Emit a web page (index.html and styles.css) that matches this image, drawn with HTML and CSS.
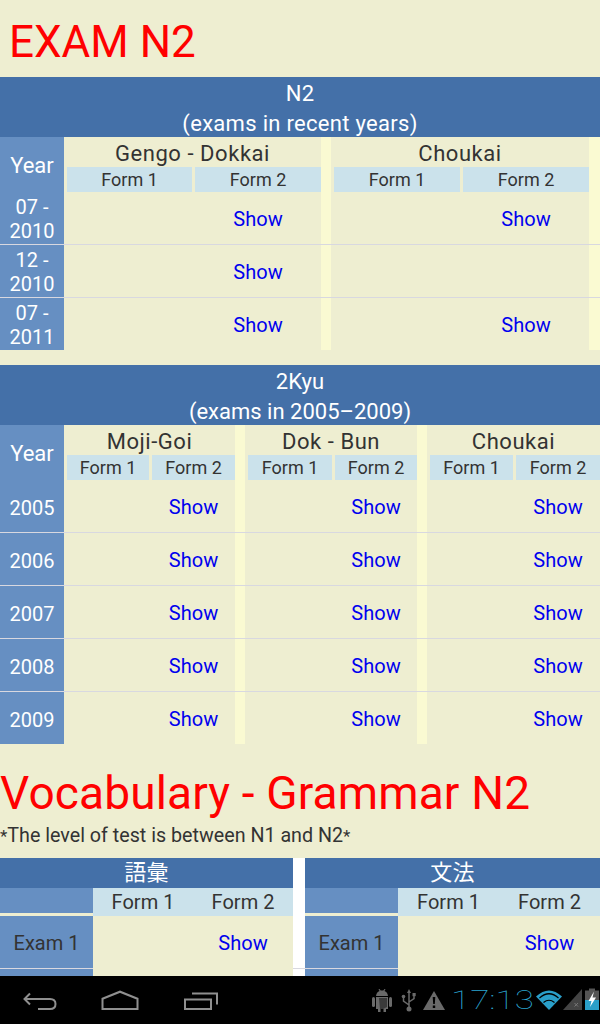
FILE: index.html
```html
<!DOCTYPE html>
<html lang="en">
<head>
    <meta charset="UTF-8">
    <meta name="viewport" content="width=device-width, initial-scale=1.0">
    <title>Exam N2</title>
    <link rel="stylesheet" href="styles.css">
</head>
<body>
    <div class="page">
        <h1 class="title title-exam">EXAM N2</h1>

        <div class="exam-table recent">
            <div class="table-head">N2<br>(exams in recent years)</div>
            <div class="row head-row">
                <div class="year year-head">Year</div>
                <div class="group g1">Gengo - Dokkai</div>
                <div class="form f1">Form 1</div>
                <div class="form f2">Form 2</div>
                <div class="strip s1"></div>
                <div class="group g2">Choukai</div>
                <div class="form f3">Form 1</div>
                <div class="form f4">Form 2</div>
                <div class="strip s2"></div>
            </div>
            <div class="row">
                <div class="year two-line">07 -<br>2010</div>
                <div></div><a class="show" href="#">Show</a><div class="strip"></div>
                <div></div><a class="show" href="#">Show</a><div class="strip"></div>
            </div>
            <div class="row line">
                <div class="year two-line">12 -<br>2010</div>
                <div></div><a class="show" href="#">Show</a><div class="strip"></div>
                <div></div><div></div><div class="strip"></div>
            </div>
            <div class="row line">
                <div class="year two-line">07 -<br>2011</div>
                <div></div><a class="show" href="#">Show</a><div class="strip"></div>
                <div></div><a class="show" href="#">Show</a><div class="strip"></div>
            </div>
        </div>

        <div class="exam-table old">
            <div class="table-head">2Kyu<br>(exams in 2005–2009)</div>
            <div class="row head-row">
                <div class="year year-head">Year</div>
                <div class="group g1">Moji-Goi</div>
                <div class="form f1">Form 1</div>
                <div class="form f2">Form 2</div>
                <div class="strip s1"></div>
                <div class="group g2">Dok - Bun</div>
                <div class="form f3">Form 1</div>
                <div class="form f4">Form 2</div>
                <div class="strip s2"></div>
                <div class="group g3">Choukai</div>
                <div class="form f5">Form 1</div>
                <div class="form f6">Form 2</div>
            </div>
            <div class="row">
                <div class="year">2005</div>
                <div></div><a class="show" href="#">Show</a><div class="strip"></div>
                <div></div><a class="show" href="#">Show</a><div class="strip"></div>
                <div></div><a class="show" href="#">Show</a>
            </div>
            <div class="row line">
                <div class="year">2006</div>
                <div></div><a class="show" href="#">Show</a><div class="strip"></div>
                <div></div><a class="show" href="#">Show</a><div class="strip"></div>
                <div></div><a class="show" href="#">Show</a>
            </div>
            <div class="row line">
                <div class="year">2007</div>
                <div></div><a class="show" href="#">Show</a><div class="strip"></div>
                <div></div><a class="show" href="#">Show</a><div class="strip"></div>
                <div></div><a class="show" href="#">Show</a>
            </div>
            <div class="row line">
                <div class="year">2008</div>
                <div></div><a class="show" href="#">Show</a><div class="strip"></div>
                <div></div><a class="show" href="#">Show</a><div class="strip"></div>
                <div></div><a class="show" href="#">Show</a>
            </div>
            <div class="row line">
                <div class="year">2009</div>
                <div></div><a class="show" href="#">Show</a><div class="strip"></div>
                <div></div><a class="show" href="#">Show</a><div class="strip"></div>
                <div></div><a class="show" href="#">Show</a>
            </div>
        </div>

        <h1 class="title title-vocab">Vocabulary - Grammar N2</h1>
        <p class="note"><span class="star">*</span>The level of test is between N1 and N2<span class="star">*</span></p>

        <div class="vocab-wrap">
            <div class="vocab-table">
                <div class="table-head small">語彙</div>
                <div class="vocab-row">
                    <div class="vocab-side side-head"></div>
                    <div class="vocab-form">Form 1</div>
                    <div class="vocab-form">Form 2</div>
                </div>
                <div class="vocab-row exam-row">
                    <div class="vocab-side">Exam 1</div>
                    <div></div>
                    <a class="show" href="#">Show</a>
                </div>
                <div class="vocab-row exam-row line">
                    <div class="vocab-side"></div>
                </div>
            </div>
            <div class="vocab-table">
                <div class="table-head small">文法</div>
                <div class="vocab-row">
                    <div class="vocab-side side-head"></div>
                    <div class="vocab-form">Form 1</div>
                    <div class="vocab-form">Form 2</div>
                </div>
                <div class="vocab-row exam-row">
                    <div class="vocab-side">Exam 1</div>
                    <div></div>
                    <a class="show" href="#">Show</a>
                </div>
                <div class="vocab-row exam-row line">
                    <div class="vocab-side"></div>
                </div>
            </div>
        </div>
    </div>

    <div class="system-bar">
        <svg class="nav-icons" width="240" height="48" viewBox="0 0 240 48">
            <path d="M30 17.5L24.5 23L30 28.5M25 23H50Q55.5 23 55.5 28T50 33H38" />
            <path d="M102.5 33V22.7L120 15.7L137.5 22.7V33Z" />
            <path d="M185 23.5H211V33H185Z" />
            <path d="M192 17.5H217V28.5" />
        </svg>
        <div class="status">
            <svg class="status-left" width="84" height="48" viewBox="0 0 84 48">
                <!-- android -->
                <path class="fill" d="M7 21H19V33H17V36H14.500V33H11.500V36H9V33H7Z" />
                <path class="fill" d="M7 20Q7.500 16 10.500 15L9.500 13H10.500L11.700 14.600Q13 14.300 14.300 14.600L15.500 13H16.500L15.500 15Q18.500 16 19 20Z" />
                <rect class="fill" x="3" y="21" width="3" height="10" rx="1.500" />
                <rect class="fill" x="20" y="21" width="3" height="10" rx="1.500" />
                <path class="dots" d="M10 22H18V31L14 33H11Z" />
                <!-- usb -->
                <path class="usb" d="M40 16V32M40 29L34.500 25V21M40 26L45 22.500V19" />
                <path class="fill" d="M40 13L42 17H38Z" />
                <circle class="fill" cx="40" cy="33" r="2.500" />
                <circle class="fill" cx="34.500" cy="20.500" r="1.800" />
                <rect class="fill" x="43.500" y="17" width="3.200" height="3.200" />
                <!-- warning -->
                <path class="fill" d="M65 15L76 34H54Z" />
                <path class="mark" d="M63.700 21H66.300L65.800 28H64.200ZM63.800 29.500H66.200V32H63.800Z" />
            </svg>
            <span class="clock">17:13</span>
            <svg class="status-right" width="64" height="48" viewBox="0 0 64 48">
                <!-- wifi -->
                <path class="wifi" d="M0 20.500Q13 8.500 26 20.500L13 34Z" />
                <path class="wifi-gap" d="M3.500 22Q13 13.500 22.500 22M7.500 26.500Q13 22 18.500 26.500" />
                <!-- signal -->
                <path class="signal" d="M46 13V34H27Z" />
                <path class="signal-x" d="M38.500 27L42 30.500M42 27L38.500 30.500" />
                <!-- battery -->
                <path class="bat-top" d="M53 14.500V12.500H59V14.500H63V24H49V14.500Z" />
                <rect class="bat-low" x="49" y="24" width="14" height="10" />
                <path class="bolt" d="M58 15.500L52.500 25H55.500L54 31L60 21.500H56.500Z" />
            </svg>
        </div>
    </div>
</body>
</html>
```

FILE: styles.css
```css
html, body {
    margin: 0;
    height: 1024px;
    overflow: hidden;
}
body {
    background: #eeeed1;
    color: #333;
    font-family: Roboto, "Noto Sans CJK JP", sans-serif;
    font-size: 20px;
    position: relative;
}
.title {
    color: #f00;
    font-weight: 400;
    line-height: 54px;
    margin: 0;
}
.title-exam {
    font-size: 44px;
    padding: 15px 0 8px 9px;
}
.title-vocab {
    font-size: 46px;
    letter-spacing: 0.15px;
    padding-top: 7px;
}
.note {
    margin: 0;
    padding: 1px 0 7px;
    line-height: 30px;
    font-size: 19.7px;
}
.star {
    font-size: 17px;
}

.exam-table {
    margin-bottom: 15px;
}
.table-head {
    background: #4470a8;
    color: #fff;
    text-align: center;
    font-size: 22px;
    letter-spacing: 0.3px;
    line-height: 30px;
    height: 58px;
    padding-top: 2px;
}
.old .table-head {
    letter-spacing: 0;
}
.table-head.small {
    height: 30px;
    padding-top: 0;
}

.row {
    display: grid;
    height: 52px;
}
.row.line {
    height: 53px;
    grid-template-rows: 53px;
}
.head-row {
    height: 55px;
    grid-template-rows: 30px 25px;
}
.recent .row {
    grid-template-columns: 64px 128px 129px 10px 129px 129px 11px;
}
.old .row {
    grid-template-columns: 64px 85px 86px 10px 87px 85px 10px 86px 87px;
}
.line > * {
    border-top: 1px solid #d8d8e0;
}
.year {
    background: #668fc2;
    color: #fff;
    line-height: 24px;
    text-align: center;
    display: flex;
    align-items: center;
    justify-content: center;
    padding-top: 4px;
    box-sizing: border-box;
}
.year.two-line {
    padding-top: 1px;
}
.year-head {
    grid-row: 1 / 3;
    grid-column: 1;
    font-size: 22px;
    padding-top: 2px;
}
.group {
    grid-row: 1;
    text-align: center;
    line-height: 34px;
    letter-spacing: 0.55px;
    font-size: 22px;
}
.g1 { grid-column: 2 / 4; }
.g2 { grid-column: 5 / 7; }
.g3 { grid-column: 8 / 10; }
.form {
    grid-row: 2;
    background: #cbe2eb;
    margin-left: 3px;
    text-align: center;
    line-height: 25px;
    font-size: 18px;
}
.f1 { grid-column: 2; }
.f2 { grid-column: 3; }
.f3 { grid-column: 5; }
.f4 { grid-column: 6; }
.f5 { grid-column: 8; }
.f6 { grid-column: 9; }
.strip {
    background: #fafad2;
}
.s1 {
    grid-column: 4;
    grid-row: 1 / 3;
}
.s2 {
    grid-column: 7;
    grid-row: 1 / 3;
}
.show {
    color: #00e;
    text-decoration: none;
    display: flex;
    align-items: center;
    justify-content: center;
    padding: 2px 0 0 3px;
    box-sizing: border-box;
}

.vocab-wrap {
    background: linear-gradient(#d8d8e0, #d8d8e0) 0 110px / 100% 1px no-repeat, #fff;
    display: grid;
    grid-template-columns: 293px 295px;
    column-gap: 12px;
    height: 118px;
    overflow: hidden;
}
.vocab-table {
    background: #eeeed1;
}
.vocab-row {
    display: grid;
    grid-template-columns: 93px 1fr 1fr;
    height: 28px;
}
.vocab-side {
    background: #668fc2;
    text-align: center;
}
.side-head {
    height: 25px;
}
.vocab-form {
    background: #cbe2eb;
    text-align: center;
    line-height: 28px;
}
.exam-row {
    height: 52px;
}
.exam-row .vocab-side {
    line-height: 54px;
}
.exam-row.line {
    height: 53px;
}
.exam-row .show {
    padding: 0;
}

.system-bar {
    position: absolute;
    left: 0;
    top: 976px;
    width: 600px;
    height: 48px;
    background: #000;
    display: flex;
    justify-content: space-between;
}
.nav-icons {
    fill: none;
    stroke: #8f8f8f;
    stroke-width: 2;
}
.status {
    display: flex;
    align-items: center;
}
.clock {
    color: #2ba4d0;
    font-family: Roboto, sans-serif;
    font-weight: 100;
    font-size: 25px;
    width: 85px;
    margin-left: -2px;
    transform: scaleX(1.4);
    transform-origin: left center;
    white-space: nowrap;
}
.fill { fill: #6a6a6a; }
.dots { fill: #3a3a3a; }
.mark { fill: #000; }
.usb {
    fill: none;
    stroke: #6a6a6a;
    stroke-width: 1.500;
}
.wifi { fill: #2a9fc9; }
.wifi-gap {
    fill: none;
    stroke: #000;
    stroke-width: 1.200;
}
.signal { fill: #444; }
.signal-x {
    stroke: #777;
    stroke-width: 1;
    fill: none;
}
.bat-top { fill: #555; }
.bat-low { fill: #2a9fc9; }
.bolt { fill: #fff; }
```
